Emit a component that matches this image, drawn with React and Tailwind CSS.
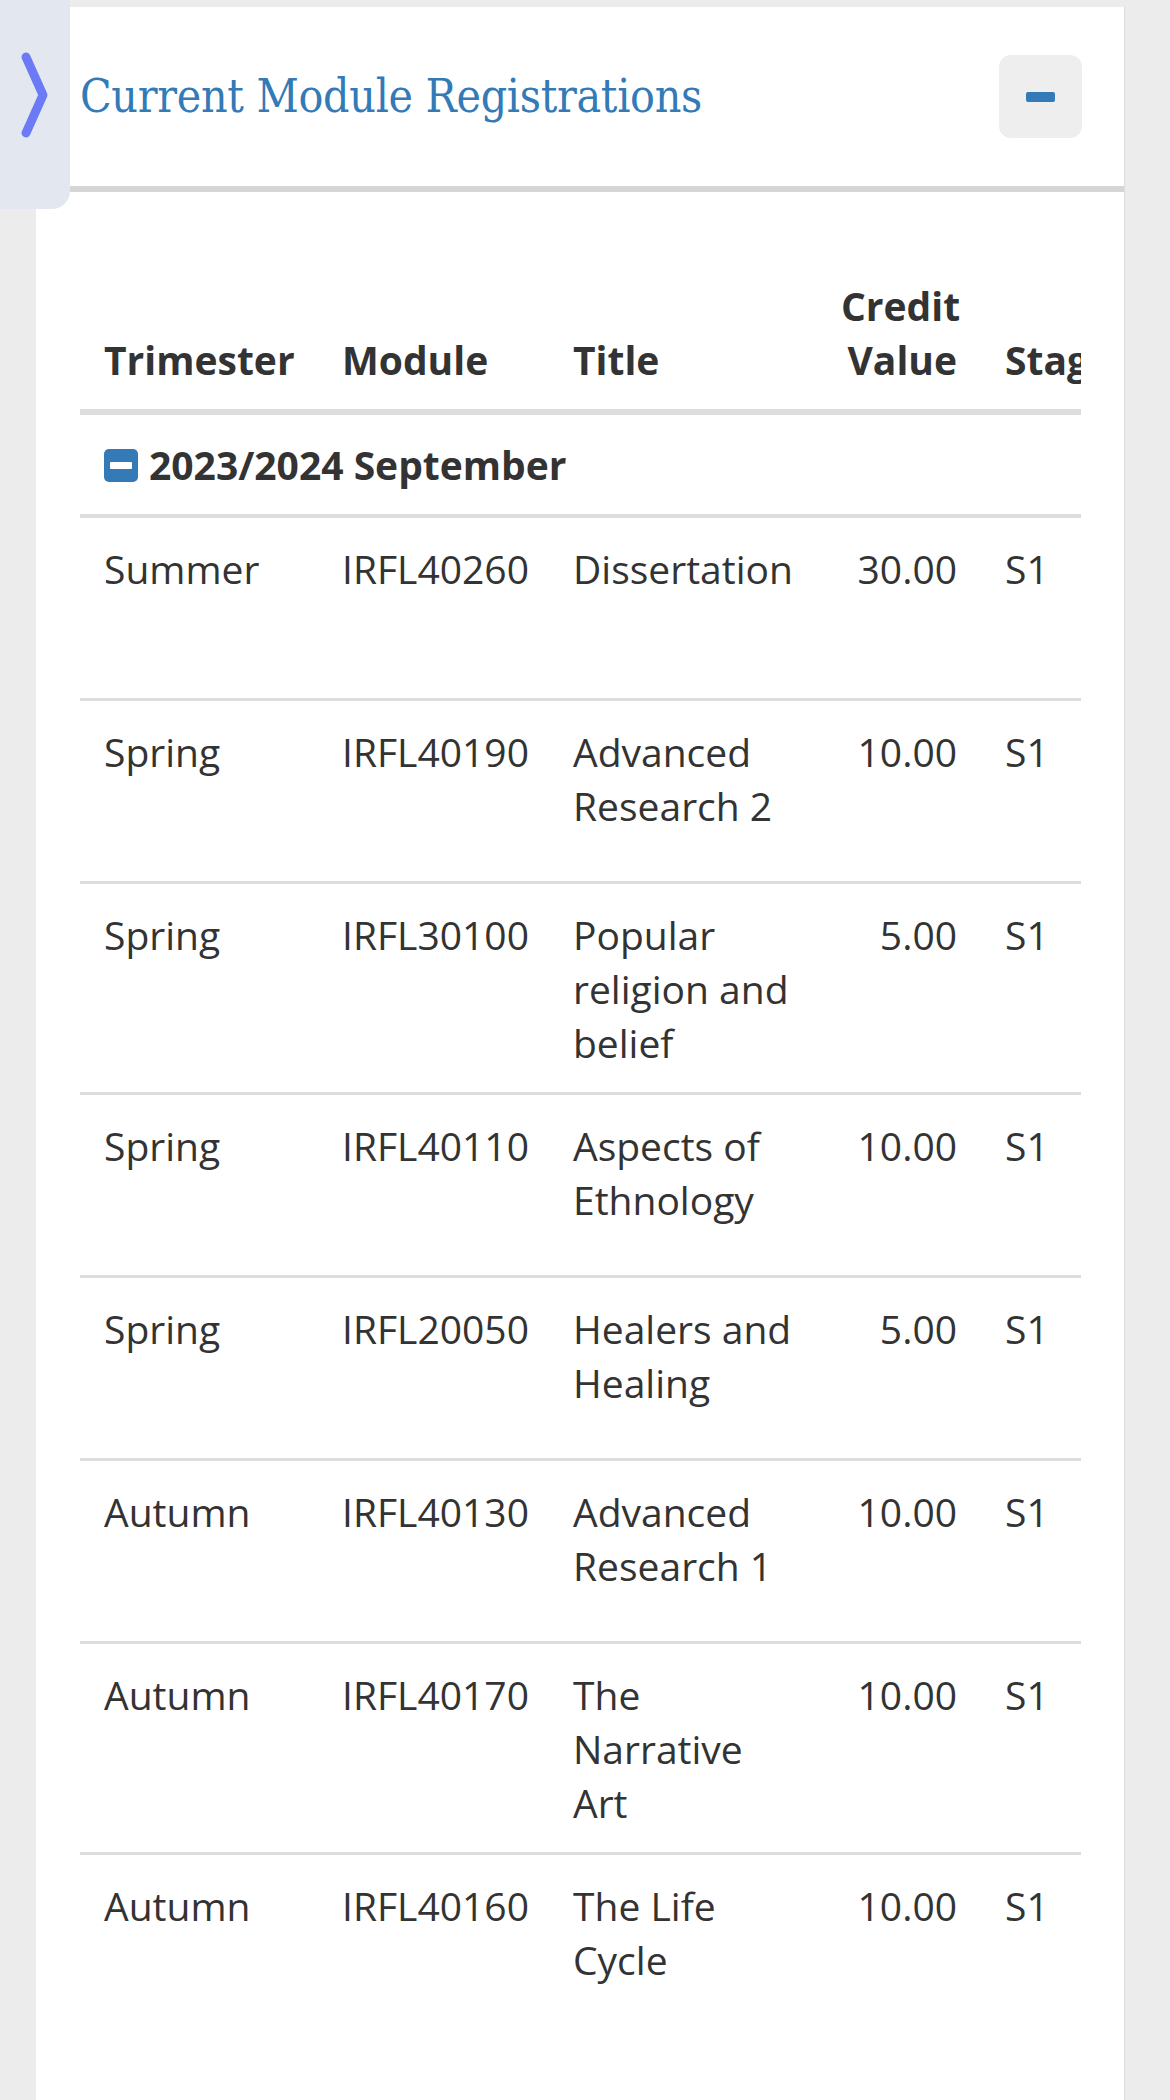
import React from "react";

const rows = [
  { term: "Summer", code: "IRFL40260", title: "Dissertation", credit: "30.00", stage: "S1" },
  { term: "Spring", code: "IRFL40190", title: "Advanced Research 2", credit: "10.00", stage: "S1" },
  { term: "Spring", code: "IRFL30100", title: "Popular religion and belief", credit: "5.00", stage: "S1" },
  { term: "Spring", code: "IRFL40110", title: "Aspects of Ethnology", credit: "10.00", stage: "S1" },
  { term: "Spring", code: "IRFL20050", title: "Healers and Healing", credit: "5.00", stage: "S1" },
  { term: "Autumn", code: "IRFL40130", title: "Advanced Research 1", credit: "10.00", stage: "S1" },
  { term: "Autumn", code: "IRFL40170", title: "The Narrative Art", credit: "10.00", stage: "S1" },
  { term: "Autumn", code: "IRFL40160", title: "The Life Cycle", credit: "10.00", stage: "S1" },
];

const App = () => {
  return (
    <div
      className="relative min-h-[2100px] bg-[#ececec] pt-[7px] pl-[36px] pr-[45px] text-[#333]"
      style={{ fontFamily: '"Open Sans", "Noto Sans", sans-serif' }}
    >
      {/* side drawer tab */}
      <div className="absolute left-0 top-0 z-10 flex h-[209px] w-[70px] items-start rounded-br-[18px] bg-[#e3e8f0]">
        <svg width="40" height="90" viewBox="0 0 40 90" className="ml-[14px] mt-[50px]">
          <path
            d="M12 7 L29 45 L12 83"
            fill="none"
            stroke="#6c7af6"
            strokeWidth="9"
            strokeLinecap="round"
            strokeLinejoin="round"
          />
        </svg>
      </div>

      <div className="min-h-[2093px] border-r border-[#dcdcdc] bg-white">
        {/* Panel header */}
        <div className="flex h-[185px] items-center justify-between pl-[44px] pr-[42px] border-b-[6px] border-[#d6d6d6]">
          <h2
            className="text-[46px] font-normal text-[#337ab7] tracking-[-0.3px]"
            style={{ fontFamily: '"DejaVu Serif Condensed", "DejaVu Serif", serif', fontStretch: "condensed" }}
          >
            Current Module Registrations
          </h2>
          <button className="flex h-[83px] w-[83px] items-center justify-center rounded-[12px] bg-[#eeeeee]">
            <span className="block h-[10px] w-[29px] rounded-[2px] bg-[#337ab7]" />
          </button>
        </div>

        {/* Panel body */}
        <div className="pt-[64px] pl-[44px] pr-[43px]">
          <div className="overflow-hidden">
            <table className="table-fixed w-[1260px] border-collapse text-[39px] leading-[54px]">
              <colgroup>
                <col className="w-[238px]" />
                <col className="w-[231px]" />
                <col className="w-[268px]" />
                <col className="w-[164px]" />
                <col className="w-[180px]" />
                <col className="w-[179px]" />
              </colgroup>
              <thead>
                <tr className="border-b-[6px] border-[#dddddd] align-bottom font-bold">
                  <th className="px-6 pt-[23px] pb-[22px] text-left font-bold">Trimester</th>
                  <th className="px-6 pt-[23px] pb-[22px] text-left font-bold">Module</th>
                  <th className="px-6 pt-[23px] pb-[22px] text-left font-bold">Title</th>
                  <th className="px-6 pt-[23px] pb-[22px] text-right font-bold">
                    Credit
                    <br />
                    Value
                  </th>
                  <th className="px-6 pt-[23px] pb-[22px] text-left font-bold whitespace-nowrap">Stage</th>
                  <th className="px-6 pt-[23px] pb-[22px] text-left font-bold whitespace-nowrap">Status</th>
                </tr>
              </thead>
              <tbody>
                <tr className="border-b-[4px] border-[#dddddd]">
                  <td colSpan={6} className="px-6 pt-[23px] pb-[22px] font-bold">
                    <div className="flex items-center">
                      <span className="flex h-[33px] w-[34px] items-center justify-center rounded-[5px] bg-[#337ab7]">
                        <span className="block h-[7px] w-[22px] rounded-[1px] bg-white" />
                      </span>
                      <span className="ml-[11px]">2023/2024 September</span>
                    </div>
                  </td>
                </tr>
                {rows.map((r, i) => (
                  <tr
                    key={i}
                    className={i < rows.length - 1 ? "border-b-[3px] border-[#dddddd] align-top" : "align-top"}
                  >
                    <td className="h-[183px] px-6 pt-[24px] pb-[22px]">{r.term}</td>
                    <td className="px-6 pt-[24px] pb-[22px]">{r.code}</td>
                    <td className="px-6 pt-[24px] pb-[22px]">{r.title}</td>
                    <td className="px-6 pt-[24px] pb-[22px] text-right">{r.credit}</td>
                    <td className="px-6 pt-[24px] pb-[22px]">{r.stage}</td>
                    <td className="px-6 pt-[24px] pb-[22px]"></td>
                  </tr>
                ))}
              </tbody>
            </table>
          </div>
        </div>
      </div>
    </div>
  );
};

export default App;
